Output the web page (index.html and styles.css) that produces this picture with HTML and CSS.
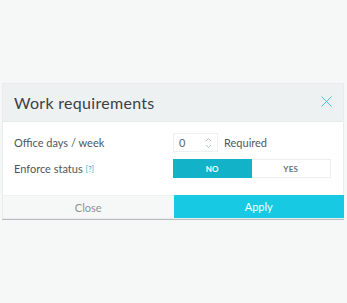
FILE: index.html
```html
<!DOCTYPE html>
<html>
<head>
<meta charset="utf-8">
<link rel="stylesheet" href="styles.css">
</head>
<body>
<div class="modal">
  <div class="modal-header">
    <h1 class="title">Work requirements</h1>
    <button class="close-x" aria-label="Close">
      <svg width="11" height="11" viewBox="0 0 11 11"><path d="M0.5 0.5 L10.5 10.5 M10.5 0.5 L0.5 10.5" stroke="#3fbfd4" stroke-width="0.9" fill="none"/></svg>
    </button>
  </div>
  <div class="modal-body">
    <div class="row">
      <div class="label">Office days / week</div>
      <div class="control">
        <div class="number">
          <span class="num-val">0</span>
          <span class="spin">
            <svg width="7" height="12" viewBox="0 0 7 12"><path d="M1 4 L3.5 1.5 L6 4 M1 8 L3.5 10.5 L6 8" stroke="#b9c3c7" stroke-width="1" fill="none"/></svg>
          </span>
        </div>
        <span class="req">Required</span>
      </div>
    </div>
    <div class="row">
      <div class="label">Enforce status <span class="help">[?]</span></div>
      <div class="control">
        <div class="toggle">
          <span class="opt active">NO</span>
          <span class="opt">YES</span>
        </div>
      </div>
    </div>
  </div>
  <div class="modal-footer">
    <button class="btn btn-close">Close</button>
    <button class="btn btn-apply">Apply</button>
  </div>
</div>
</body>
</html>
```
FILE: styles.css
```css
html, body {
  margin: 0;
  padding: 0;
}
body {
  background: #f6f7f7;
  font-family: Lato, "Open Sans", sans-serif;
  width: 347px;
  height: 303px;
  overflow: hidden;
}
.modal {
  margin: 84px 0 0 3px;
  width: 340px;
  background: #ffffff;
  box-shadow: 0 0 0 1px #e9eced, 0 1px 0 1px #b9bdbf;
}
.modal-header {
  height: 38px;
  background: #eef1f2;
  border-bottom: 1px solid #e6eaeb;
  box-sizing: border-box;
  display: flex;
  align-items: center;
  justify-content: space-between;
  padding: 0 11px 0 11px;
}
.title {
  margin: 0;
  font-size: 16px;
  font-weight: 400;
  color: #3a4043;
  letter-spacing: 0.3px;
}
.close-x {
  border: 0;
  background: none;
  padding: 0;
  display: flex;
  margin-top: -3px;
}
.modal-body {
  padding: 11px 11px 17px 11px;
  display: flex;
  flex-direction: column;
  gap: 7px;
}
.row {
  display: grid;
  grid-template-columns: 159px auto;
  align-items: center;
}
.label {
  font-size: 11px;
  color: #50575a;
}
.help {
  font-size: 8px;
  color: #16b5cc;
  vertical-align: 1px;
}
.control {
  display: flex;
  align-items: center;
}
.number {
  width: 45px;
  height: 19px;
  box-sizing: border-box;
  border: 1px solid #edf0f1;
  display: flex;
  align-items: center;
  justify-content: space-between;
  padding: 0 5px 0 5px;
}
.num-val {
  font-size: 11px;
  color: #666;
}
.spin {
  display: flex;
}
.req {
  font-size: 11px;
  color: #50575a;
  margin-left: 6px;
}
.toggle {
  display: flex;
  width: 158px;
  height: 19px;
  box-sizing: border-box;
  border: 1px solid #eceff0;
}
.opt {
  flex: 1;
  display: flex;
  align-items: center;
  justify-content: center;
  font-size: 8px;
  font-weight: 700;
  color: #6a7174;
  letter-spacing: 0.2px;
}
.opt.active {
  background: #12b2c9;
  color: #ffffff;
  margin: -1px 0 -1px -1px;
}
.modal-footer {
  display: flex;
  height: 23px;
  background: #f6f8f8;
  border-top: 1px solid #eef1f1;
  box-sizing: border-box;
}
.btn {
  flex: 1;
  border: 0;
  font-family: Lato, "Open Sans", sans-serif;
  font-size: 11px;
  padding: 0;
}
.btn-close {
  background: transparent;
  color: #8a9294;
}
.btn-apply {
  background: #17c9e2;
  color: #ffffff;
  margin: -1px -1px 0 0;
}
```
